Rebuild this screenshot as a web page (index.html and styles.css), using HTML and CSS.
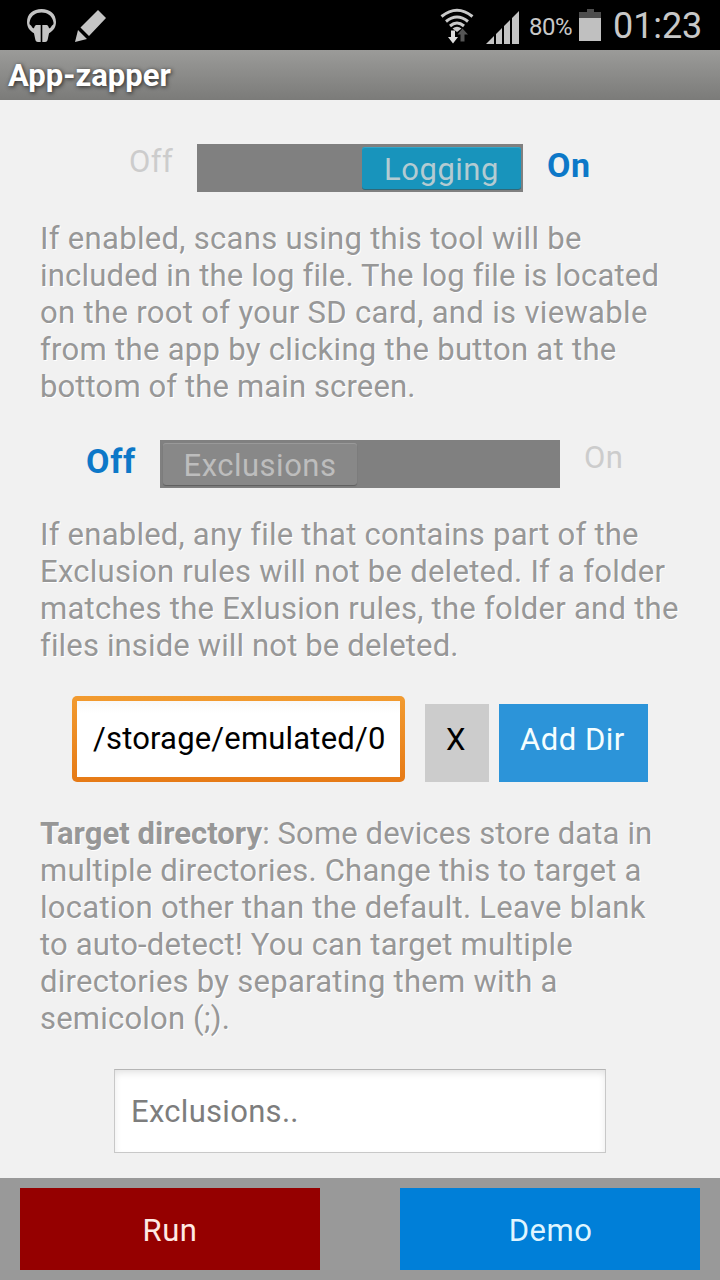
FILE: index.html
```html
<!DOCTYPE html>
<html lang="en">
<head>
<meta charset="utf-8">
<title>App-zapper</title>
<link rel="stylesheet" href="styles.css">
</head>
<body>
<header class="status">
  <svg class="headset" width="30" height="34" viewBox="0 0 30 34" fill="#c4c4c4"><path d="M7.500 24.500C2.500 22 0 18 0 13C0 5 6 0 14.500 0S29 5 29 13C29 18 26.500 22 21.500 24.500V19.500Q24 19 25 16.500L26.300 15.500Q26.800 13.500 26 11.500C24.500 6.500 20.500 3.500 14.500 3.500S4.500 6.500 3 11.500Q2.200 13.500 2.700 15.500L4 16.500Q5 19 7.500 19.500Z"/><path d="M9 16H13.700V33H11Q8.500 33 8.200 30L6.500 22Q7 17 9 16ZM15.300 16H20Q22 17 22.500 22L20.800 30Q20.500 33 18 33H15.300Z"/></svg>
  <svg class="pencil" width="32" height="33" viewBox="0 0 32 33" fill="#c4c4c4"><path d="M23 0L31 8L14 26L5.500 17.500ZM3 20L12 29L0 32Z"/></svg>
  <svg class="wifi" width="34" height="36" viewBox="0 0 34 36"><g fill="none" stroke="#c9c9c9" stroke-width="3"><path d="M1.500 8.500Q17 -4 32.500 8.500M6 13.500Q17 4.500 28 13.500M10 18Q17 12 24 18"/></g><path d="M12.500 20.500Q17 17 21.500 20.500L17 24Z" fill="#c9c9c9"/><path d="M11 22.500H15V29H18L13 35.500L8 29H11Z" fill="#ddd"/><path d="M20.500 33.500H24.500V26.500H28L22.500 20.500L17.500 26.500H20.500Z" fill="#555"/></svg>
  <svg class="signal" width="34" height="33" viewBox="0 0 34 33" fill="#c4c4c4"><path d="M0 33L8 25V33ZM10 23L16 17V33H10ZM18 15L24 9V33H18ZM26 7L33 0V33H26Z"/></svg>
  <span class="percent">80%</span>
  <svg class="battery" width="22" height="32" viewBox="0 0 22 32"><path d="M8 0H15V3H22V9H0V3H8Z" fill="#4d4d4d"/><path d="M0 9H22V32H0Z" fill="#c0c0c0"/></svg>
  <span class="clock">01:23</span>
</header>
<div class="titlebar"><span class="title">App-zapper</span></div>
<main class="content">
  <div class="toggle logging">
    <span class="idle">Off</span>
    <div class="track"><span class="thumb">Logging</span></div>
    <span class="active">On</span>
  </div>
  <p class="help first">
    <span class="line a1">If enabled, scans using this tool will be</span>
    <span class="line a2">included in the log file. The log file is located</span>
    <span class="line a3">on the root of your SD card, and is viewable</span>
    <span class="line a4">from the app by clicking the button at the</span>
    <span class="line a5">bottom of the main screen.</span>
  </p>
  <div class="toggle exclusions">
    <span class="active">Off</span>
    <div class="track"><span class="thumb">Exclusions</span></div>
    <span class="idle">On</span>
  </div>
  <p class="help second">
    <span class="line b1">If enabled, any file that contains part of the</span>
    <span class="line b2">Exclusion rules will not be deleted. If a folder</span>
    <span class="line b3">matches the Exlusion rules, the folder and the</span>
    <span class="line b4">files inside will not be deleted.</span>
  </p>
  <div class="directory">
    <div class="path"><span class="path-text">/storage/emulated/0</span></div>
    <div class="clear"><span>X</span></div>
    <div class="add"><span class="add-text">Add Dir</span></div>
  </div>
  <p class="help third">
    <span class="line c1"><b>Target directory</b>: Some devices store data in</span>
    <span class="line c2">multiple directories. Change this to target a</span>
    <span class="line c3">location other than the default. Leave blank</span>
    <span class="line c4">to auto-detect! You can target multiple</span>
    <span class="line c5">directories by separating them with a</span>
    <span class="line c6">semicolon (;).</span>
  </p>
  <div class="filter"><span class="filter-text">Exclusions..</span></div>
</main>
<footer class="actions">
  <div class="button run"><span>Run</span></div>
  <div class="button demo"><span>Demo</span></div>
</footer>
</body>
</html>
```
FILE: styles.css
```css
* { box-sizing: border-box; }
body {
  margin: 0;
  width: 720px;
  height: 1280px;
  display: flex;
  flex-direction: column;
  overflow: hidden;
  background: #f1f1f1;
  font-family: Roboto, "Liberation Sans", sans-serif;
  font-size: 31px;
  line-height: 37px;
  letter-spacing: 0.5px;
  white-space: nowrap;
}
.status {
  height: 50px;
  flex: none;
  display: flex;
  align-items: flex-start;
  background: #000;
  color: #c8c8c8;
}
.status svg { flex: none; }
.headset { margin: 9px 0 0 27px; }
.pencil { margin: 10px 0 0 18px; }
.wifi { margin: 8px 0 0 333px; }
.signal { margin: 11px 0 0 12px; }
.percent { width: 50px; margin: 9px 0 0 9px; font-size: 24px; letter-spacing: -0.5px; }
.battery { margin: 9px 0 0 0; }
.clock { margin: 8px 0 0 12px; font-size: 36px; letter-spacing: -0.1px; }
.titlebar {
  height: 50px;
  flex: none;
  padding: 7px 8px;
  background: linear-gradient(#9b9b99, #7b7b79);
  color: #fff;
  font-weight: 700;
  font-size: 31px;
  letter-spacing: 0;
  text-shadow: 1px 1px 4px #222;
}
.content {
  height: 1078px;
  flex: none;
  padding-top: 44px;
}
.toggle { display: flex; height: 48px; color: #ccc; }
.logging { padding-left: 129px; }
.exclusions { padding-left: 86px; margin-top: 35px; }
.logging .idle { width: 68px; }
.exclusions .active { width: 74px; letter-spacing: 0.7px; }
.toggle > span { flex: none; }
.idle { margin-top: -1px; }
.active { margin-top: 3px; color: #0d78c8; font-size: 34px; font-weight: 700; }
.track { flex: none; display: flex; height: 48px; padding: 3px 2px; margin-right: 24px; background: #808080; }
.logging .track { width: 326px; justify-content: flex-end; }
.exclusions .track { width: 400px; padding-left: 3px; }
.thumb {
  height: 42px;
  padding-top: 4px;
  border-radius: 3px;
  text-align: center;
  background: #888;
  color: #bdbdbd;
  box-shadow: 0 1px 1px #5d5d5d, inset 0 1px #999;
}
.logging .thumb { width: 159px; background: #1894bc; color: #b3cbd2; box-shadow: 0 1px #306878, inset 0 1px #32a5c8; }
.exclusions .thumb { width: 194px; }
.help { margin: 0 0 0 40px; color: #979797; text-shadow: 1px 1px 0 #fff; }
.line { display: block; width: max-content; }
.a1, .a4 { letter-spacing: 0.31px; }
.a2, .c4 { letter-spacing: 0.19px; }
.a3 { letter-spacing: 0.34px; }
.a5 { letter-spacing: 0.13px; }
.b1 { letter-spacing: 0.24px; }
.b2, .b3, .c3, .c5 { letter-spacing: 0.27px; }
.b4 { letter-spacing: 0.15px; }
.c1 { letter-spacing: 0.12px; }
.c1 b { letter-spacing: 0.03px; }
.c2, .c6 { letter-spacing: 0.2px; }
.first, .second { margin-top: 28px; }
.directory { display: flex; height: 86px; margin: 32px 0 0 72px; align-items: flex-start; }
.path {
  width: 333px;
  height: 86px;
  padding: 19px 16px;
  border: 5px solid transparent;
  border-radius: 5px;
  background: linear-gradient(#f8f8f8, #fff 12px) padding-box, linear-gradient(#f29b30, #e67a16) border-box;
  color: #000;
  letter-spacing: 0.18px;
}
.clear, .add { height: 78px; margin-top: 8px; padding-top: 17px; text-align: center; }
.clear { width: 64px; margin-left: 20px; padding-right: 2px; background: #ccc; color: #000; }
.add { width: 149px; margin-left: 10px; padding-right: 2px; background: #2c94d9; color: #f4feff; }
.third { margin-top: 33px; }
.filter {
  width: 492px;
  height: 84px;
  margin: 32px 0 0 114px;
  padding: 23px 16px;
  border: 1px solid #c8c8c8;
  border-top-color: #b5b5b5;
  background: #fff;
  box-shadow: inset 0 4px 8px -2px #ddd;
  color: #7d7d7d;
  letter-spacing: 0.3px;
}
.actions {
  height: 102px;
  flex: none;
  display: flex;
  justify-content: space-between;
  padding: 10px 20px;
  background: #999;
}
.button { width: 300px; height: 82px; padding-top: 24px; text-align: center; }
.demo { padding-left: 1px; }
.run { background: #950000; color: #ffe9e4; }
.demo { background: #007fd8; color: #dff5ff; }
```
